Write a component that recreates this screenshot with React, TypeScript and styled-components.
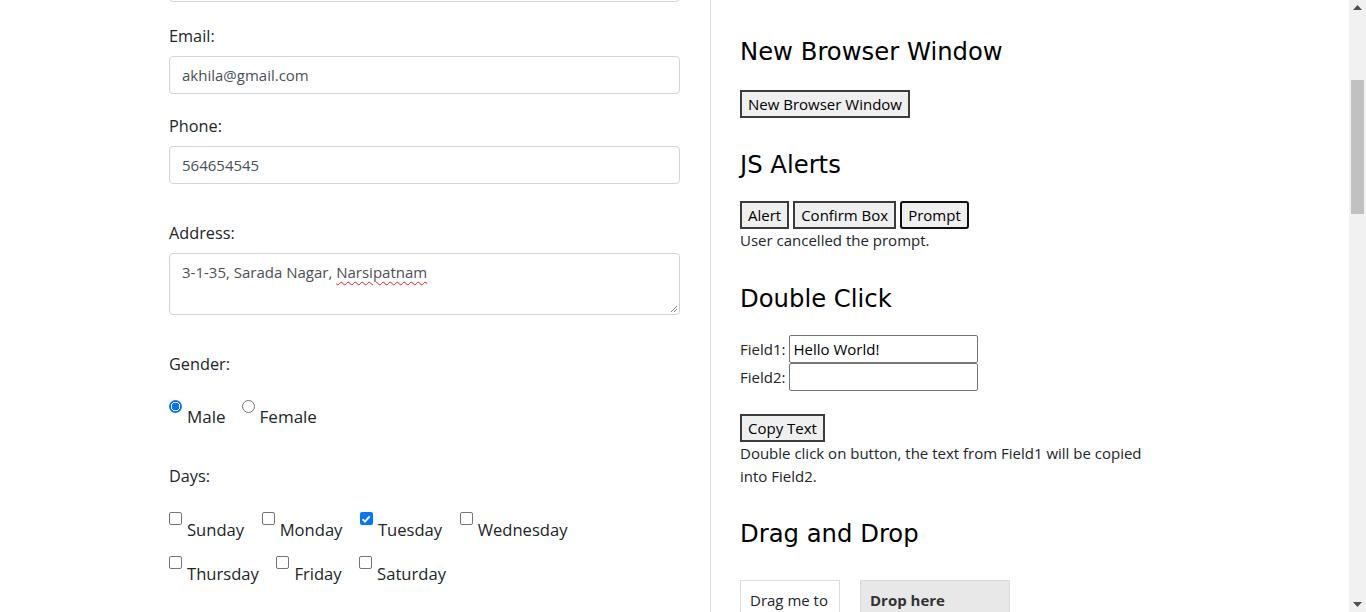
import React from "react";
import styled, { createGlobalStyle } from "styled-components";

const Global = createGlobalStyle`
  html, body { margin: 0; padding: 0; height: 612px; overflow: hidden; background: #fff; }
  body { font-family: "Open Sans", "Noto Sans", sans-serif; color: #212529; }
  * { box-sizing: border-box; }
`;

const Page = styled.div`
  display: flex;
  height: 612px;
  overflow: hidden;
`;

const Content = styled.div`
  flex: 1;
  display: flex;
  align-items: stretch;
`;

const LeftCol = styled.div`
  width: 711px;
  padding: 0 30px 0 169px;
  border-right: 1px solid #dcdcdc;
  display: flex;
  flex-direction: column;
`;

const RightCol = styled.div`
  flex: 1;
  padding: 0 0 0 29px;
  font-family: "Open Sans", "Noto Sans", sans-serif;
  font-size: 15px;
  color: #212529;
`;

const Group = styled.div<{ $mt?: number }>`
  margin-top: ${(p) => p.$mt ?? 0}px;
  display: flex;
  flex-direction: column;
`;

const Label = styled.label`
  font-size: 16.3px;
  line-height: 24px;
  margin-bottom: 8px;
  color: #212529;
`;

const TextInput = styled.input`
  width: 511px;
  height: 38px;
  border: 1px solid #ced4da;
  border-radius: 4px;
  padding: 0 12px;
  font-family: "Open Sans", "Noto Sans", sans-serif;
  font-size: 15px;
  color: #495057;
  background: #fff;
  outline: none;
`;

const Misspelled = styled.span`
  text-decoration: underline wavy #e02020;
  text-decoration-thickness: 1px;
  text-underline-offset: 3px;
`;

const FakeArea = styled.div`
  width: 511px;
  height: 62px;
  border: 1px solid #ced4da;
  border-radius: 4px;
  padding: 6px 12px;
  font-size: 15px;
  line-height: 24px;
  color: #495057;
  position: relative;
`;

const Grip = styled.svg`
  position: absolute;
  right: 1px;
  bottom: 1px;
`;

const OptionRow = styled.div<{ $mt?: number }>`
  display: flex;
  align-items: flex-start;
  margin-top: ${(p) => p.$mt ?? 0}px;
`;

const Option = styled.label<{ $mr: number; $fs?: number }>`
  display: flex;
  align-items: flex-start;
  margin-right: ${(p) => p.$mr}px;
  font-size: ${(p) => p.$fs ?? 17}px;
  line-height: 24px;
  color: #212529;
`;

const OptText = styled.span<{ $mt?: number }>`
  margin-top: ${(p) => p.$mt ?? 5}px;
  margin-left: 5px;
`;

const Radio = styled.span<{ $on?: boolean }>`
  width: 13px;
  height: 13px;
  border-radius: 50%;
  flex: none;
  border: ${(p) => (p.$on ? "none" : "1px solid #767676")};
  background: ${(p) =>
    p.$on
      ? "radial-gradient(circle, #0075ff 0 3.6px, #fff 4px 4.6px, #0075ff 5px)"
      : "#fff"};
`;

const Check = styled.span<{ $on?: boolean }>`
  width: 13px;
  height: 13px;
  border-radius: 2px;
  flex: none;
  border: ${(p) => (p.$on ? "none" : "1px solid #767676")};
  background: ${(p) => (p.$on ? "#0075ff" : "#fff")};
  display: flex;
  align-items: center;
  justify-content: center;
`;

const H2 = styled.h2<{ $mt: number }>`
  font-family: "DejaVu Sans", Verdana, sans-serif;
  font-weight: normal;
  font-size: 24.3px;
  line-height: 29px;
  margin: ${(p) => p.$mt}px 0 0 0;
  color: #000;
`;

const Btn = styled.button<{ $focus?: boolean }>`
  height: 28px;
  padding: 0 6px;
  font-family: "Open Sans", "Noto Sans", sans-serif;
  font-size: 15px;
  color: #000;
  background: #efefef;
  border: 2px solid ${(p) => (p.$focus ? "#101010" : "#3c3c3c")};
  border-radius: ${(p) => (p.$focus ? "3px" : "0")};
  margin-right: 4px;
`;

const BtnRow = styled.div<{ $mt: number }>`
  display: flex;
  margin-top: ${(p) => p.$mt}px;
`;

const Note = styled.div`
  line-height: 24px;
  margin-top: -1px;
`;

const FieldRow = styled.div`
  display: flex;
  align-items: center;
  height: 28px;
  gap: 4px;
`;

const FieldInput = styled.input`
  width: 189px;
  height: 28px;
  border: 1px solid #767676;
  border-radius: 2px;
  padding: 0 3px;
  font-family: "Open Sans", "Noto Sans", sans-serif;
  font-size: 15px;
  color: #000;
  outline: none;
`;

const Fields = styled.div`
  margin-top: 22px;
`;

const Para = styled.p`
  margin: 0;
  width: 420px;
  line-height: 23px;
`;

const DragArea = styled.div`
  display: flex;
  gap: 20px;
  margin-top: 32px;
`;

const Box = styled.div<{ $drop?: boolean }>`
  width: ${(p) => (p.$drop ? 150 : 100)}px;
  height: 100px;
  border: 1px solid #dcdcdc;
  background: ${(p) => (p.$drop ? "#e8e8e8" : "#fff")};
  padding: 8px 9px;
  font-weight: ${(p) => (p.$drop ? 700 : 400)};
  color: ${(p) => (p.$drop ? "#333" : "#212529")};
  line-height: 22px;
`;

const Scrollbar = styled.div`
  width: 17px;
  background: #f1f1f1;
  display: flex;
  flex-direction: column;
  align-items: center;
  justify-content: space-between;
  padding: 5px 0;
`;

const Track = styled.div`
  flex: 1;
  width: 100%;
  display: flex;
  flex-direction: column;
  align-items: center;
`;

const Thumb = styled.div`
  width: 13px;
  height: 134px;
  background: #c1c1c1;
  margin-top: 70px;
`;

const days1 = [
  { d: "Sunday" },
  { d: "Monday" },
  { d: "Tuesday", on: true },
  { d: "Wednesday" },
];
const days2 = [{ d: "Thursday" }, { d: "Friday" }, { d: "Saturday" }];

const Tick = () => (
  <svg width="10" height="10" viewBox="0 0 10 10">
    <path d="M1.5 5.2 L4 7.6 L8.6 2.3" fill="none" stroke="#fff" strokeWidth="1.9" />
  </svg>
);

export default function App() {
  return (
    <>
      <Global />
      <Page>
        <Content>
          <LeftCol>
            <Group $mt={-36}>
              <TextInput defaultValue="Akhila" readOnly />
            </Group>
            <Group $mt={22}>
              <Label>Email:</Label>
              <TextInput defaultValue="akhila@gmail.com" readOnly />
            </Group>
            <Group $mt={20}>
              <Label>Phone:</Label>
              <TextInput defaultValue="564654545" readOnly />
            </Group>
            <Group $mt={37}>
              <Label>Address:</Label>
              <FakeArea>
                3-1-35, Sarada Nagar, <Misspelled>Narsipatnam</Misspelled>
                <Grip width="8" height="8" viewBox="0 0 8 8">
                  <path d="M7 1 L1 7 M7 4 L4 7" stroke="#888" strokeWidth="1" />
                </Grip>
              </FakeArea>
            </Group>
            <Group $mt={37}>
              <Label>Gender:</Label>
            </Group>
            <OptionRow $mt={16}>
              <Option $mr={16}>
                <Radio $on />
                <OptText>Male</OptText>
              </Option>
              <Option $mr={0}>
                <Radio />
                <OptText>Female</OptText>
              </Option>
            </OptionRow>
            <Group $mt={35}>
              <Label>Days:</Label>
            </Group>
            <OptionRow $mt={16}>
              {days1.map((x) => (
                <Option key={x.d} $mr={17.5} $fs={16.6}>
                  <Check $on={x.on}>{x.on && <Tick />}</Check>
                  <OptText $mt={6}>{x.d}</OptText>
                </Option>
              ))}
            </OptionRow>
            <OptionRow $mt={14}>
              {days2.map((x) => (
                <Option key={x.d} $mr={17.5} $fs={16.6}>
                  <Check />
                  <OptText $mt={6}>{x.d}</OptText>
                </Option>
              ))}
            </OptionRow>
          </LeftCol>
          <RightCol>
            <H2 $mt={37}>New Browser Window</H2>
            <BtnRow $mt={24}>
              <Btn>New Browser Window</Btn>
            </BtnRow>
            <H2 $mt={32}>JS Alerts</H2>
            <BtnRow $mt={22}>
              <Btn>Alert</Btn>
              <Btn>Confirm Box</Btn>
              <Btn $focus>Prompt</Btn>
            </BtnRow>
            <Note>User cancelled the prompt.</Note>
            <H2 $mt={32}>Double Click</H2>
            <Fields>
              <FieldRow>
                Field1: <FieldInput defaultValue="Hello World!" readOnly />
              </FieldRow>
              <FieldRow>
                Field2: <FieldInput readOnly />
              </FieldRow>
            </Fields>
            <BtnRow $mt={23}>
              <Btn>Copy Text</Btn>
            </BtnRow>
            <Para>Double click on button, the text from Field1 will be copied into Field2.</Para>
            <H2 $mt={31}>Drag and Drop</H2>
            <DragArea>
              <Box>Drag me to</Box>
              <Box $drop>Drop here</Box>
            </DragArea>
          </RightCol>
        </Content>
        <Scrollbar>
          <svg width="9" height="5" viewBox="0 0 9 5">
            <path d="M0 5 L4.5 0 L9 5 Z" fill="#505050" />
          </svg>
          <Track>
            <Thumb />
          </Track>
          <svg width="9" height="5" viewBox="0 0 9 5">
            <path d="M0 0 L4.5 5 L9 0 Z" fill="#505050" />
          </svg>
        </Scrollbar>
      </Page>
    </>
  );
}
